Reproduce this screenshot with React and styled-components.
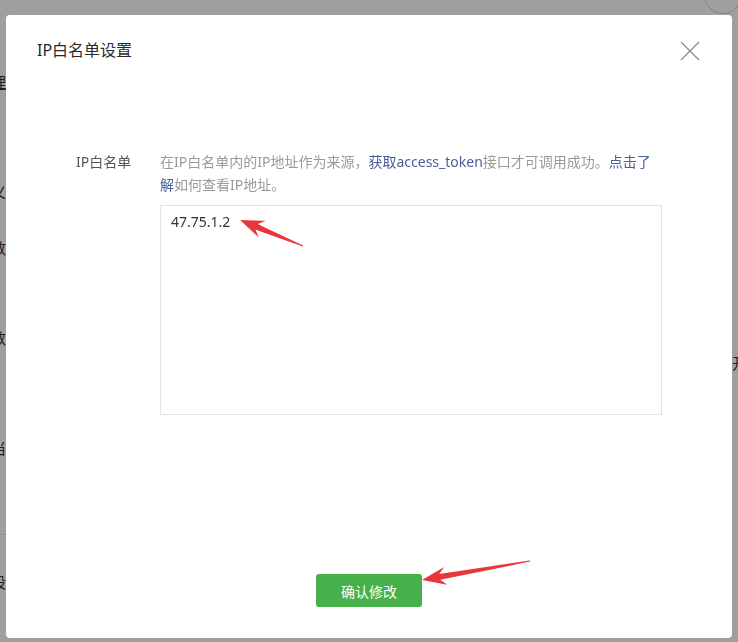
import React from 'react';
import styled, { createGlobalStyle } from 'styled-components';

const GlobalStyle = createGlobalStyle`
  html, body {
    margin: 0;
    padding: 0;
    background: #ffffff;
    overflow: hidden;
  }
  body {
    font-family: "Noto Sans", "Noto Sans CJK SC", sans-serif;
  }
`;

// page behind the mask, only slivers of it show
const Page = styled.div`
  position: relative;
  width: 738px;
  height: 642px;
  overflow: hidden;
  color: #333;
`;

const SideColumn = styled.div`
  display: flex;
  flex-direction: column;
  margin-left: -9px;
  font-family: "Noto Sans CJK SC", sans-serif;
  font-size: 15px;
  line-height: 16px;
`;

const PageText = styled.div`
  margin-top: ${({ $gap }) => $gap}px;
  text-decoration: ${({ $underline }) => ($underline ? 'underline' : 'none')};
`;

const PageRule = styled.div`
  margin-top: ${({ $gap }) => $gap}px;
  height: 1px;
  width: 738px;
  background: #e4e4e4;
`;

const Avatar = styled.div`
  position: absolute;
  right: -4px;
  top: -24px;
  width: 36px;
  height: 36px;
  border-radius: 50%;
  border: 1px solid #d0d0d0;
`;

const RightText = styled.div`
  position: absolute;
  right: -9px;
  top: 352px;
  font-family: "Noto Sans CJK SC", sans-serif;
  font-size: 15px;
`;

const Mask = styled.div`
  position: fixed;
  inset: 0;
  background: rgba(0, 0, 0, 0.375);
`;

const Dialog = styled.div`
  position: fixed;
  left: 6px;
  top: 15px;
  width: 726px;
  height: 623px;
  background: #fff;
  border-radius: 4px;
  display: flex;
  flex-direction: column;
  font-family: "Noto Sans", "Noto Sans CJK SC", sans-serif;
`;

const Header = styled.div`
  height: 70px;
  box-sizing: border-box;
  padding: 24px 32px 0 31px;
  display: flex;
  justify-content: space-between;
  align-items: flex-start;
`;

const Title = styled.h3`
  margin: 0;
  font-size: 16px;
  line-height: 22px;
  font-weight: 400;
  color: #2a2a2a;
`;

const CloseButton = styled.button`
  margin-top: 2px;
  width: 20px;
  height: 20px;
  padding: 0;
  border: 0;
  background: none;
  cursor: pointer;
  display: flex;
  align-items: center;
  justify-content: center;
`;

const Body = styled.div`
  flex: 1;
  padding: 65px 0 0 70px;
`;

const FormRow = styled.div`
  display: flex;
`;

const Label = styled.div`
  width: 84px;
  font-size: 14px;
  line-height: 23px;
  color: #555;
`;

const Field = styled.div`
  width: 502px;
`;

const Tip = styled.p`
  margin: 0;
  font-size: 14px;
  line-height: 23px;
  color: #9a9a9a;
`;

const Link = styled.a`
  color: #49609a;
  text-decoration: none;
`;

const IpBox = styled.textarea`
  display: block;
  margin-top: 9px;
  width: 502px;
  height: 210px;
  box-sizing: border-box;
  padding: 7px 10px;
  border: 1px solid #e2e2e2;
  font-family: "Noto Sans", "Noto Sans CJK SC", sans-serif;
  font-size: 14px;
  line-height: 18px;
  color: #333;
  resize: none;
  outline: none;
`;

const Footer = styled.div`
  display: flex;
  justify-content: center;
  padding-bottom: 31px;
`;

const PrimaryButton = styled.button`
  width: 106px;
  height: 33px;
  border: 0;
  border-radius: 3px;
  background: #46b04a;
  color: #fff;
  font-family: "Noto Sans CJK SC", sans-serif;
  font-size: 14px;
  cursor: pointer;
`;

const Marks = styled.svg`
  position: absolute;
  left: 0;
  top: 0;
  width: 726px;
  height: 623px;
  pointer-events: none;
`;

// red annotation arrow, thin tail widening to a head at the tip
const arrowPoints = (sx, sy, tx, ty) => {
  const len = Math.hypot(tx - sx, ty - sy);
  const dx = (tx - sx) / len;
  const dy = (ty - sy) / len;
  const nx = -dy;
  const ny = dx;
  const head = 24;
  const neck = 18;
  const pt = (d, w) => `${(tx - dx * d + nx * w).toFixed(1)},${(ty - dy * d + ny * w).toFixed(1)}`;
  return [
    `${(sx + nx * 0.6).toFixed(1)},${(sy + ny * 0.6).toFixed(1)}`,
    pt(neck, 3),
    pt(head, 9),
    `${tx},${ty}`,
    pt(head, -9),
    pt(neck, -3),
    `${(sx - nx * 0.6).toFixed(1)},${(sy - ny * 0.6).toFixed(1)}`,
  ].join(' ');
};

const arrows = [
  { from: [297, 231], to: [234, 205] },
  { from: [524, 546], to: [416, 565] },
];

const App = () => {
  return (
    <>
      <GlobalStyle />
      <Page>
        <SideColumn>
          <PageText $gap={74} $underline>理</PageText>
          <PageText $gap={94}>义</PageText>
          <PageText $gap={40}>数</PageText>
          <PageText $gap={74}>数</PageText>
          <PageText $gap={6}>A</PageText>
          <PageText $gap={72}>当</PageText>
          <PageRule $gap={78} />
          <PageText $gap={39}>设</PageText>
        </SideColumn>
        <Avatar />
        <RightText>开</RightText>
      </Page>
      <Mask />
      <Dialog>
        <Header>
          <Title>IP白名单设置</Title>
          <CloseButton aria-label="关闭">
            <svg width="20" height="20" viewBox="0 0 20 20">
              <path d="M1 1 L19 19 M19 1 L1 19" stroke="#8c8c8c" strokeWidth="1.3" fill="none" />
            </svg>
          </CloseButton>
        </Header>
        <Body>
          <FormRow>
            <Label>IP白名单</Label>
            <Field>
              <Tip>
                在IP白名单内的IP地址作为来源，<Link href="#">获取access_token</Link>接口才可调用成功。
                <Link href="#">点击了解</Link>如何查看IP地址。
              </Tip>
              <IpBox defaultValue="47.75.1.2" />
            </Field>
          </FormRow>
        </Body>
        <Footer>
          <PrimaryButton>确认修改</PrimaryButton>
        </Footer>
        <Marks viewBox="0 0 726 623">
          {arrows.map((a, i) => (
            <polygon key={i} points={arrowPoints(a.from[0], a.from[1], a.to[0], a.to[1])} fill="#e8363a" />
          ))}
        </Marks>
      </Dialog>
    </>
  );
};

export default App;
